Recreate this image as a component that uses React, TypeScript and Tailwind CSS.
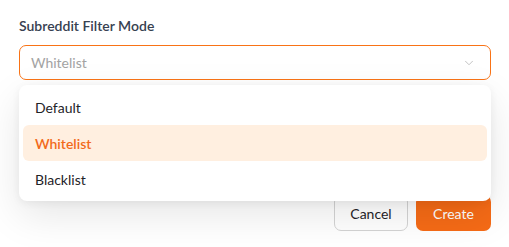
import { ChevronDown } from "lucide-react";

const options = ["Default", "Whitelist", "Blacklist"];

export default function App() {
  const selected = "Whitelist";

  return (
    <div
      className="min-h-[247px] w-full bg-white text-[#1f2328]"
      style={{ fontFamily: "Lato, 'Noto Sans', sans-serif" }}
    >
      <div className="pl-[19px] pr-[18px] pt-[16px]">
        <label className="block text-[14px] font-semibold leading-[20px] text-[#374151]">
          Subreddit Filter Mode
        </label>

        <div className="relative mt-[9px]">
          <button className="flex h-[35px] w-full items-center justify-between rounded-[7px] border-[1.5px] border-[#f97316] bg-white pl-[11px] pr-[14px] text-left">
            <span className="text-[14px] text-[#a3a3a3]">{selected}</span>
            <ChevronDown className="h-[14px] w-[14px] text-[#b0b0b0]" strokeWidth={1.3} />
          </button>

          {/* open menu */}
          <div className="absolute left-0 right-0 top-[40px] z-10 rounded-[8px] bg-white p-[4px] shadow-[0_14px_40px_rgba(0,0,0,0.1),0_2px_8px_rgba(0,0,0,0.06)]">
            {options.map((o) => (
              <div
                key={o}
                className={
                  o === selected
                    ? "flex h-[36px] items-center rounded-[6px] bg-[#ffefe0] px-[12px] text-[14px] font-semibold text-[#f26a1b]"
                    : "flex h-[36px] items-center rounded-[6px] px-[12px] text-[14px] font-normal text-[#1f2328]"
                }
              >
                {o}
              </div>
            ))}
          </div>
        </div>

        <div className="mt-[115px] flex justify-end gap-[8px]">
          <button className="h-[36px] w-[74px] rounded-[7px] border border-[#d4d4d4] bg-white text-[14px] font-normal text-[#1f2328]">
            Cancel
          </button>
          <button className="h-[36px] w-[75px] rounded-[7px] bg-[#f66b16] text-[14px] font-normal text-white">
            Create
          </button>
        </div>
      </div>
    </div>
  );
}
